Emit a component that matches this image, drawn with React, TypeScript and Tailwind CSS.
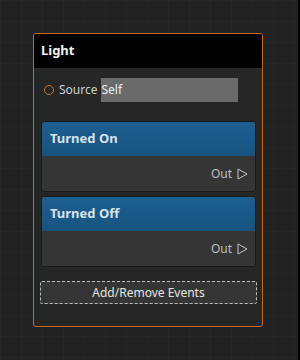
import React from "react";

const font = { fontFamily: '"Noto Sans", "Open Sans", sans-serif' };

function EventCard({ title }: { title: string }) {
  return (
    <div className="overflow-hidden rounded-[3px] border border-[#1b1b1b] bg-[#353535]">
      <div className="flex h-[34px] items-center bg-gradient-to-b from-[#1c5f92] to-[#17537f] px-[8px] text-[13px] font-bold text-[#d8e2ea]">
        {title}
      </div>
      <div className="flex h-[35px] items-center justify-end gap-[5px] pr-[7px] text-[12px] text-[#bdbdbd]">
        <span>Out</span>
        <svg width="11" height="12" viewBox="0 0 11 12">
          <path d="M1 1 L10 6 L1 11 Z" fill="none" stroke="#c4c4c4" strokeWidth="1" strokeLinejoin="miter" />
        </svg>
      </div>
    </div>
  );
}

export default function App() {
  return (
    <div
      className="flex h-[360px] w-[300px] bg-[#212121] bg-[linear-gradient(rgba(255,255,255,0.02)_1px,transparent_1px),linear-gradient(90deg,rgba(255,255,255,0.02)_1px,transparent_1px)] bg-[size:21px_21px]"
      style={font}
    >
      <div className="flex-1 pl-[33px] pt-[33px]">
        <div className="w-[230px] overflow-hidden rounded-[3px] border-[1.5px] border-[#c06e22] bg-[#262626]">
          <div className="flex h-[34px] items-center bg-black px-[7px] text-[13px] font-bold text-[#f0f0f0]">
            Light
          </div>
          <div className="flex items-center pl-[10px] pt-[10px]">
            <span className="h-[10px] w-[10px] rounded-full border-[1.5px] border-[#c0752a]" />
            <span className="ml-[5px] text-[12px] text-[#d0d0d0]">Source</span>
            <div className="ml-[3px] flex h-[24px] w-[137px] items-center bg-[#6a6a6a] pl-[1px] text-[12px] text-[#e6eef8]">
              Self
            </div>
          </div>
          <div className="ml-[7px] mr-[6px] mt-[19px] flex flex-col gap-[4px]">
            <EventCard title="Turned On" />
            <EventCard title="Turned Off" />
          </div>
          <div className="mb-[22px] ml-[6px] mr-[5px] mt-[14px] flex h-[23px] items-center justify-center rounded-[2px] border border-dashed border-[#bdbdbd] bg-[#353535] text-[12px] text-[#e4e4e4]">
            Add/Remove Events
          </div>
        </div>
      </div>
      <div className="w-[2px] bg-black" />
    </div>
  );
}
